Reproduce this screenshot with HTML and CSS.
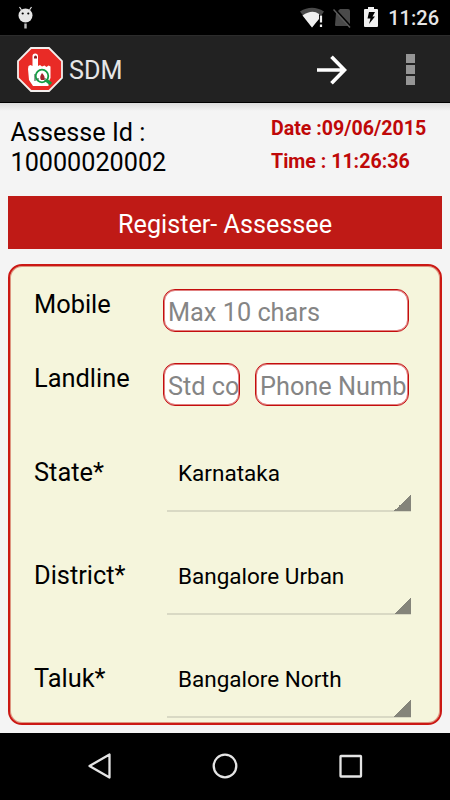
FILE: index.html
```html
<!DOCTYPE html>
<html lang="en">
<head>
    <meta charset="UTF-8">
    <meta name="viewport" content="width=device-width, initial-scale=1.0">
    <title>SDM</title>
    <link rel="stylesheet" href="styles.css">
</head>
<body>
    <div class="status-bar">
        <svg class="debug-icon" width="18" height="24" viewBox="0 0 18 24">
            <path d="M4.500 4L2.500 1M12.500 4L14.500 1" stroke="#e6e6e6" stroke-width="1.200"/>
            <circle cx="8.500" cy="9.500" r="7" fill="#e6e6e6"/>
            <path d="M8.500 17.500v5" stroke="#bdbdbd" stroke-width="2.400"/>
            <circle cx="5.700" cy="7.500" r="1.100" fill="#000"/>
            <circle cx="11.300" cy="7.500" r="1.100" fill="#000"/>
        </svg>
        <div class="status-right">
            <svg class="wifi-icon" width="25" height="22" viewBox="0 0 25 22">
                <path d="M0 4.500Q12 -3 24 4.500L21.500 8H19v3L12 20.500z" fill="#4a4a4a"/>
                <path d="M2.500 8.500Q12 2 19 7v5L12 20.500z" fill="#f0f0f0"/>
                <path d="M21 8.500v7M21 17.500v2.500" stroke="#f0f0f0" stroke-width="2.200"/>
            </svg>
            <svg class="sim-icon" width="19" height="20" viewBox="0 0 19 20">
                <path d="M3 5l4-4h8q2 0 2 2v15H3q-1 0-1-1z" fill="#4a4a4a"/>
                <path d="M1.500 1L18 19" stroke="#000" stroke-width="2.500"/>
                <path d="M.5 1.500L17 19.500" stroke="#5c5c5c" stroke-width="1.500"/>
            </svg>
            <svg class="battery-icon" width="14" height="22" viewBox="0 0 14 22">
                <path d="M1 3h3V1h6v2h3q1 0 1 1v16q0 1-1 1H1q-1 0-1-1V4q0-1 1-1z" fill="#f0f0f0"/>
                <path d="M5 6h6L8.500 10.500H11L5 18l1.500-5.500H3.500z" fill="#000"/>
            </svg>
            <span class="clock">11:26</span>
        </div>
    </div>

    <div class="action-bar">
        <svg class="logo" width="46" height="46" viewBox="0 0 46 46">
            <path d="M14 1h18l13 13v17L32 44H14L1 31V14z" fill="#e92b26" stroke="#f3efed" stroke-width="1.800"/>
            <path d="M15.500 9q0-2.500 2.700-2.500T21 9v10l2-1 2 1.500 2.500-1 2 1.500 2-1.500 2 1V31l-2 4v4H16l-4-6-1-11 .5-3 2-1 2 1z" fill="#fff"/>
            <path d="M17 9.500q1.500-2 3 0v2h-3z" fill="#8c1f22"/>
            <path d="M18 27v7M21 31v3M28 31v3" stroke="#75807b" stroke-width="1.500"/>
            <path d="M25 26q-3 4-1 7h3q2-3-2-7z" fill="#a4232b"/>
            <circle cx="25" cy="29" r="6.300" fill="none" stroke="#149c45" stroke-width="1.800"/>
            <path d="M29 33l5 4" stroke="#149c45" stroke-width="3.500"/>
        </svg>
        <span class="app-name">SDM</span>
        <svg class="next-icon" width="30" height="30" viewBox="0 0 30 30">
            <path d="M0 15h27M14.500 1.800L27.500 15L14.500 28.200" fill="none" stroke="#fff" stroke-width="3.700"/>
        </svg>
        <div class="overflow">
            <i></i>
            <i></i>
            <i></i>
        </div>
    </div>

    <div class="content">
        <div class="info">
            <div class="assesse">Assesse Id :<br>10000020002</div>
            <div class="date-time">
                <p>Date :09/06/2015</p>
                <p>Time : 11:26:36</p>
            </div>
        </div>

        <h1 class="banner">Register- Assessee</h1>

        <form class="form">
            <div class="row">
                <label for="mobile">Mobile</label>
                <input class="mobile" id="mobile" type="tel" maxlength="10" placeholder="Max 10 chars">
            </div>
            <div class="row">
                <label for="std">Landline</label>
                <input class="std" id="std" type="tel" placeholder="Std code">
                <input class="phone" type="tel" placeholder="Phone Number">
            </div>
            <div class="row spinner-row first">
                <label>State*</label>
                <div class="spinner">Karnataka</div>
            </div>
            <div class="row spinner-row">
                <label>District*</label>
                <div class="spinner">Bangalore Urban</div>
            </div>
            <div class="row spinner-row">
                <label>Taluk*</label>
                <div class="spinner">Bangalore North</div>
            </div>
        </form>
    </div>

    <div class="nav-bar">
        <svg width="26" height="30" viewBox="0 0 26 30">
            <path d="M2.500 15L22.500 3.500v23z" fill="none" stroke="#e4e4e4" stroke-width="2.300" stroke-linejoin="round"/>
        </svg>
        <svg width="26" height="30" viewBox="0 0 26 30">
            <circle cx="13" cy="15" r="11.300" fill="none" stroke="#e4e4e4" stroke-width="2.300"/>
        </svg>
        <svg width="26" height="30" viewBox="0 0 26 30">
            <rect x="3.500" y="5" width="20.500" height="20.500" rx="0.500" fill="none" stroke="#e4e4e4" stroke-width="2.300"/>
        </svg>
    </div>
</body>
</html>
```
FILE: styles.css
```css
* {
    box-sizing: border-box;
}
body {
    margin: 0;
    width: 450px;
    height: 800px;
    overflow: hidden;
    font-family: Roboto, sans-serif;
    background-color: #f4f4f4;
    color: black;
}
svg {
    display: block;
    flex: none;
}
.status-bar {
    height: 35px;
    display: flex;
    justify-content: space-between;
    padding: 6px 11px 0 17px;
    background-color: black;
}
.status-right {
    display: flex;
    align-items: flex-start;
}
.wifi-icon {
    margin-top: 1px;
}
.sim-icon {
    margin: 2px 0 0 8px;
}
.battery-icon {
    margin-left: 12px;
}
.clock {
    margin-left: 10px;
    font-size: 20px;
    line-height: 25px;
    font-weight: 500;
    color: #e6e6e6;
}
.action-bar {
    height: 68px;
    display: flex;
    align-items: center;
    padding: 1px 35px 0 17px;
    background-color: #222;
    border-top: 1px solid #2c2c2c;
    border-bottom: 1px solid black;
}
.app-name {
    margin: 2px 0 0 6px;
    font-size: 25.2px;
    color: #e6e6e6;
}
.next-icon {
    margin-left: auto;
}
.overflow {
    margin-left: 59px;
    display: flex;
    flex-direction: column;
    gap: 2px;
}
.overflow i {
    width: 9px;
    height: 9px;
    background-color: #959595;
}
.content {
    height: 630px;
    padding: 0 8px;
    background: linear-gradient(#dcdcdc, #f4f4f4 8px);
}
.info {
    height: 93px;
    display: flex;
    justify-content: space-between;
    padding: 15px 15px 0 2.5px;
}
.assesse {
    font-size: 25.2px;
    line-height: 30px;
}
.date-time {
    width: 156px;
    margin-top: -6px;
    white-space: nowrap;
    font-size: 19.6px;
    line-height: 33px;
    font-weight: bold;
    color: #bf0808;
}
.date-time p {
    margin: 0;
}
.banner {
    height: 53px;
    margin: 0 0 15px;
    font-size: 25.2px;
    line-height: 57px;
    font-weight: normal;
    text-align: center;
    color: white;
    background-color: #bf1a16;
}
.form {
    height: 461px;
    padding: 23px 28px 0 24px;
    border: 2px solid #cb1814;
    border-radius: 14px;
    background-color: #f5f5dc;
    box-shadow: inset 0 0 0 1px #dd9580;
}
.row {
    display: flex;
    height: 74px;
}
.row label {
    width: 129px;
    flex: none;
    font-size: 25.4px;
    line-height: 30px;
}
.row input {
    height: 43px;
    padding: 3px 1px 0 4px;
    border: 1px solid #c40d0d;
    border-radius: 12px;
    font-family: inherit;
    font-size: 25.3px;
    background-color: white;
    box-shadow: inset 0 0 0 1px #e08080;
}
.row input::placeholder {
    color: #858585;
    opacity: 1;
}
.row .mobile {
    width: 246px;
}
.row .std {
    width: 77px;
}
.row .phone {
    width: 154px;
    margin-left: 15px;
}
.spinner-row {
    height: 103px;
    padding-top: 49px;
}
.spinner-row.first {
    height: 74px;
    padding-top: 20px;
}
.spinner {
    width: 244px;
    height: 55px;
    margin-left: 4px;
    padding-left: 11px;
    font-size: 22.5px;
    line-height: 32px;
    background:
        linear-gradient(135deg, transparent 50%, #84847a 50%) right bottom 1px / 17px 17px no-repeat,
        linear-gradient(#d9d9c4, #d9d9c4) left bottom / 100% 2px no-repeat;
}
.nav-bar {
    height: 67px;
    display: flex;
    justify-content: space-between;
    padding: 18px 87px 0;
    background-color: black;
}
```
